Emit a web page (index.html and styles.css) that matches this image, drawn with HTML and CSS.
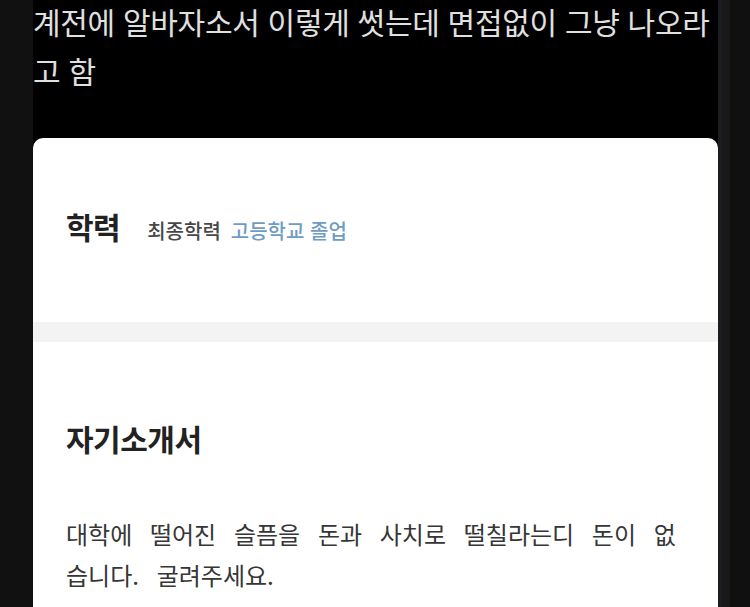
FILE: index.html
```html
<!DOCTYPE html>
<html lang="ko">
<head>
    <meta charset="UTF-8">
    <meta name="viewport" content="width=device-width, initial-scale=1.0">
    <title>알바 자소서</title>
    <link rel="stylesheet" href="styles.css">
</head>
<body>
    <div class="page">
        <div class="gutter-left"></div>
        <div class="column">
            <p class="caption">계전에 알바자소서 이렇게 썻는데 면접없이 그냥 나오라고 함</p>
            <div class="card">
                <div class="edu">
                    <span class="section-title">학력</span>
                    <span class="edu-label">최종학력</span>
                    <span class="edu-value">고등학교 졸업</span>
                </div>
                <div class="divider"></div>
                <div class="intro">
                    <div class="section-title">자기소개서</div>
                    <p class="intro-text">대학에 떨어진 슬픔을 돈과 사치로 떨칠라는디 돈이 없습니다. 굴려주세요.</p>
                </div>
            </div>
        </div>
        <div class="gutter-right"></div>
    </div>
</body>
</html>
```

FILE: styles.css
```css
html, body {
    margin: 0;
    padding: 0;
    height: 100%;
    overflow: hidden;
    background: #111111;
    font-family: "Noto Sans CJK KR", "Noto Sans", sans-serif;
}
.page {
    display: flex;
    height: 607px;
}
.gutter-left {
    width: 33px;
    background: #111111;
}
.column {
    width: 685px;
    background: #000000;
    display: flex;
    flex-direction: column;
}
.gutter-right {
    width: 32px;
    background: #101010;
    border-left: 4px solid #1b1b22; /* faint edge of the next panel */
    box-sizing: border-box;
    box-shadow: inset 8px 0 0 #181818;
}
.caption {
    margin: -3px 0 0;
    color: #e0e0e0;
    font-size: 30px;
    line-height: 49px;
    letter-spacing: -0.3px;
    height: 141px;
}
.card {
    flex: 1;
    background: #ffffff;
    border-radius: 10px 10px 0 0;
    color: #222222;
}
.edu {
    height: 184px;
    box-sizing: border-box;
    padding: 70px 33px 0;
    display: flex;
    align-items: baseline;
    line-height: 36px;
}
.section-title {
    font-size: 30px;
    font-weight: bold;
    color: #222222;
    letter-spacing: -0.5px;
}
.edu-label {
    margin-left: 27px;
    font-size: 20px;
    font-weight: 500;
    color: #484848;
}
.edu-value {
    margin-left: 10px;
    font-size: 20px;
    font-weight: 500;
    color: #6f9cc4;
}
.divider {
    height: 20px;
    background: #f3f3f3;
}
.intro {
    padding: 78px 33px 0;
}
.intro .section-title {
    line-height: 36px;
}
.intro-text {
    margin: 57px 0 0;
    font-size: 24px;
    line-height: 41px;
    word-spacing: 11px;
    color: #363636;
}
```
